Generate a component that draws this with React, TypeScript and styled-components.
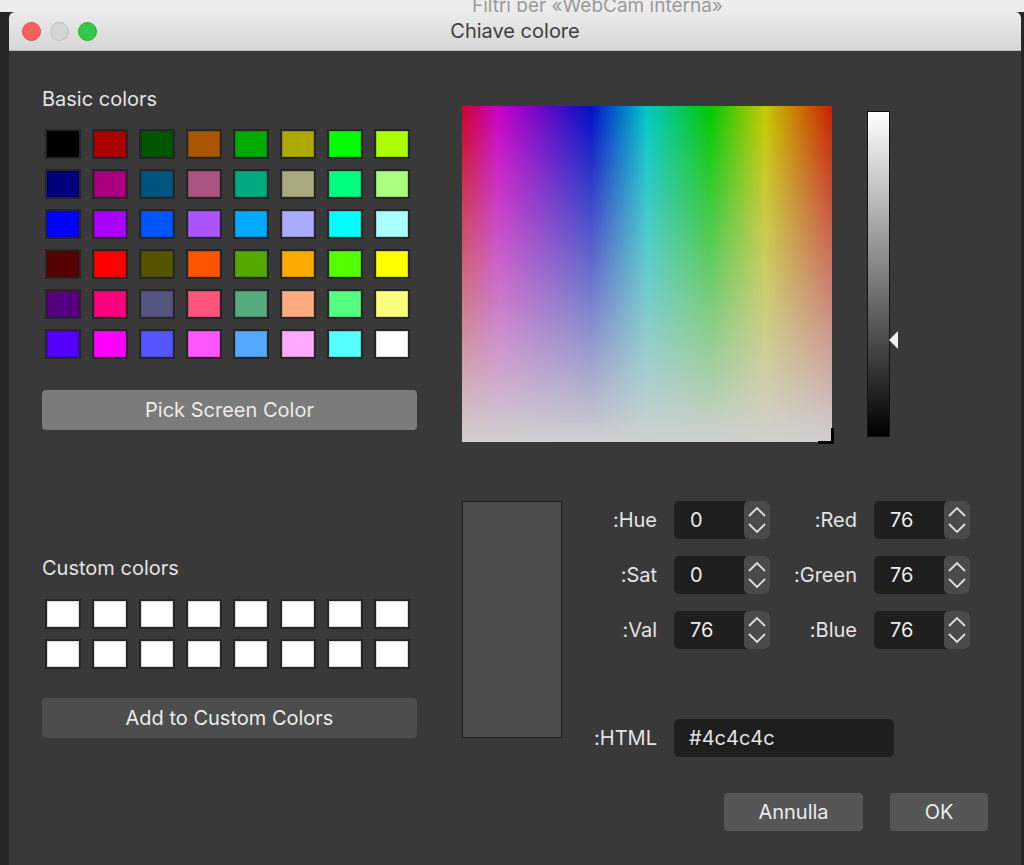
import React from 'react'
import styled, { createGlobalStyle } from 'styled-components'

const Global = createGlobalStyle`
  html, body { margin: 0; padding: 0; background: #2b2b2b; }
  body { font-family: Inter, "Noto Sans", "Liberation Sans", sans-serif; -webkit-font-smoothing: antialiased; }
`

const basic = [
  ['#000000', '#aa0000', '#005500', '#aa5500', '#00aa00', '#aaaa00', '#00ff00', '#aaff00'],
  ['#00007f', '#aa007f', '#00557f', '#aa557f', '#00aa7f', '#aaaa7f', '#00ff7f', '#aaff7f'],
  ['#0000ff', '#aa00ff', '#0055ff', '#aa55ff', '#00aaff', '#aaaaff', '#00ffff', '#aaffff'],
  ['#550000', '#ff0000', '#555500', '#ff5500', '#55aa00', '#ffaa00', '#55ff00', '#ffff00'],
  ['#55007f', '#ff007f', '#55557f', '#ff557f', '#55aa7f', '#ffaa7f', '#55ff7f', '#ffff7f'],
  ['#5500ff', '#ff00ff', '#5555ff', '#ff55ff', '#55aaff', '#ffaaff', '#55ffff', '#ffffff'],
]

const Desktop = styled.div`
  width: 1024px;
  height: 865px;
  overflow: hidden;
  display: flex;
  flex-direction: column;
`
const BackTitle = styled.div`
  height: 12px;
  flex: none;
  background: #ececec;
  overflow: hidden;
  color: #9a9a9a;
  font-size: 19px;
  line-height: 12px;
  padding-left: 472px;
  white-space: nowrap;
`
const DesktopRow = styled.div`
  flex: 1;
  display: flex;
`
const Side = styled.div<{ $w: number }>`
  width: ${p => p.$w}px;
  flex: none;
  background: #262626;
`
const Window = styled.div`
  width: 1012px;
  flex: none;
  display: flex;
  flex-direction: column;
  background: #393939;
  border-radius: 6px 6px 0 0;
  overflow: hidden;
`
const TitleBar = styled.div`
  height: 38px;
  flex: none;
  background: linear-gradient(#ebebeb, #d6d6d6);
  border-bottom: 1px solid #b8b8b8;
  display: flex;
  align-items: center;
  position: relative;
  padding-left: 13px;
  gap: 9px;
`
const Light = styled.span<{ $c: string; $b: string }>`
  width: 17px;
  height: 17px;
  border-radius: 50%;
  background: ${p => p.$c};
  border: 1px solid ${p => p.$b};
  position: relative;
  z-index: 1;
`
const Title = styled.div`
  position: absolute;
  left: 0;
  right: 0;
  text-align: center;
  font-size: 20px;
  color: #404040;
`
const Body = styled.div`
  flex: 1;
  display: flex;
  padding: 0 0 0 33px;
  gap: 45px;
  color: #e4e4e4;
  font-size: 20px;
`
const LeftCol = styled.div`
  width: 375px;
  display: flex;
  flex-direction: column;
`
const Label = styled.div<{ $top: number }>`
  margin-top: ${p => p.$top}px;
  height: 24px;
  line-height: 24px;
`
const Swatches = styled.div<{ $top: number }>`
  margin-top: ${p => p.$top}px;
  margin-left: 3px;
  display: grid;
  grid-template-columns: repeat(8, 36px);
  grid-auto-rows: 30px;
  column-gap: 11px;
  row-gap: 10px;
`
const Swatch = styled.div<{ $c: string }>`
  background: ${p => p.$c};
  border: 2px solid #262626;
  box-shadow: inset 0 0 0 1px rgba(0, 0, 0, 0.15);
`
const WideButton = styled.div<{ $top: number; $light?: boolean }>`
  margin-top: ${p => p.$top}px;
  height: 40px;
  border-radius: 4px;
  background: ${p => (p.$light ? '#7b7b7b' : '#4d4d4d')};
  display: flex;
  align-items: center;
  justify-content: center;
  color: #ececec;
`
const RightCol = styled.div`
  flex: 1;
  display: flex;
  flex-direction: column;
`
const PickerRow = styled.div`
  margin-top: 55px;
  display: flex;
  gap: 35px;
`
const Spectrum = styled.div`
  width: 370px;
  height: 336px;
  position: relative;
  background: linear-gradient(to bottom, rgba(208, 208, 208, 0), rgba(208, 208, 208, 1)),
    linear-gradient(to right, #d0002a, #c800c8 10%, #0010c8 35%, #00c8c8 50%, #00c800 67%, #c8c800 82%, #c82000);
`
const Cross = styled.div`
  position: absolute;
  right: -2px;
  bottom: -2px;
  width: 13px;
  height: 13px;
  border-right: 3px solid #000;
  border-bottom: 3px solid #000;
`
const ValueBar = styled.div`
  margin-top: 5px;
  width: 21px;
  height: 324px;
  border: 1px solid #111;
  background: linear-gradient(#ffffff, #000000);
  position: relative;
`
const Pointer = styled.div`
  position: absolute;
  right: -9px;
  top: 219px;
  width: 0;
  height: 0;
  border-top: 9px solid transparent;
  border-bottom: 9px solid transparent;
  border-right: 9px solid #f2f2f2;
`
const Lower = styled.div`
  margin-top: 59px;
  display: flex;
`
const Preview = styled.div`
  width: 98px;
  height: 235px;
  background: #4c4c4c;
  border: 1px solid #1d1d1d;
`
const Fields = styled.div`
  display: grid;
  grid-template-columns: 95px 96px 70px 96px;
  column-gap: 17px;
  row-gap: 17px;
  grid-auto-rows: 38px;
  align-items: center;
`
const FieldLabel = styled.div`
  text-align: right;
  white-space: nowrap;
  direction: rtl;
`
const Spin = styled.div`
  height: 38px;
  display: flex;
  background: #1e1e1e;
  border-radius: 5px;
  overflow: hidden;
`
const SpinText = styled.div`
  flex: 1;
  padding-left: 16px;
  line-height: 38px;
  color: #ececec;
`
const Arrows = styled.div`
  width: 26px;
  background: #4a4a4a;
  border-radius: 5px;
  display: flex;
  flex-direction: column;
  justify-content: space-around;
  align-items: center;
  padding: 2px 0;
`
const HtmlBox = styled.div`
  grid-column: 2 / span 3;
  width: 205px;
  height: 38px;
  line-height: 38px;
  background: #1e1e1e;
  border-radius: 5px;
  padding-left: 15px;
  margin-top: 106px;
`
const HtmlLabel = styled(FieldLabel)`
  margin-top: 106px;
`
const Footer = styled.div`
  margin-top: 55px;
  display: flex;
  justify-content: flex-end;
  gap: 27px;
  padding-right: 33px;
`
const DlgButton = styled.div<{ $w: number }>`
  width: ${p => p.$w}px;
  height: 38px;
  border-radius: 4px;
  background: #565656;
  display: flex;
  align-items: center;
  justify-content: center;
  color: #ececec;
`

const Chev = ({ up }: { up?: boolean }) => (
  <svg width="20" height="11" viewBox="0 0 20 11">
    <path d={up ? 'M2 10 L10 2 L18 10' : 'M2 1 L10 9 L18 1'} stroke="#e0e0e0" strokeWidth="1.8" fill="none" />
  </svg>
)

const SpinBox = ({ value }: { value: string }) => (
  <Spin>
    <SpinText>{value}</SpinText>
    <Arrows>
      <Chev up />
      <Chev />
    </Arrows>
  </Spin>
)

const fields = [
  ['Hue:', '0', 'Red:', '76'],
  ['Sat:', '0', 'Green:', '76'],
  ['Val:', '76', 'Blue:', '76'],
]

export default function App() {
  return (
    <Desktop>
      <Global />
      <BackTitle>Filtri per «WebCam interna»</BackTitle>
      <DesktopRow>
        <Side $w={9} />
        <Window>
          <TitleBar>
            <Light $c="#fc605b" $b="#de4a44" />
            <Light $c="#d5d5d5" $b="#bdbdbd" />
            <Light $c="#34c84a" $b="#2aa83c" />
            <Title>Chiave colore</Title>
          </TitleBar>
          <Body>
            <LeftCol>
              <Label $top={36}>Basic colors</Label>
              <Swatches $top={18}>
                {basic.flat().map((c, i) => (
                  <Swatch key={i} $c={c} />
                ))}
              </Swatches>
              <WideButton $top={31} $light>Pick Screen Color</WideButton>
              <Label $top={126}>Custom colors</Label>
              <Swatches $top={19}>
                {Array.from({ length: 16 }).map((_, i) => (
                  <Swatch key={i} $c="#ffffff" />
                ))}
              </Swatches>
              <WideButton $top={29}>Add to Custom Colors</WideButton>
            </LeftCol>
            <RightCol>
              <PickerRow>
                <Spectrum>
                  <Cross />
                </Spectrum>
                <ValueBar>
                  <Pointer />
                </ValueBar>
              </PickerRow>
              <Lower>
                <Preview />
                <Fields>
                  {fields.map(r => (
                    <React.Fragment key={r[0]}>
                      <FieldLabel>{r[0]}</FieldLabel>
                      <SpinBox value={r[1]} />
                      <FieldLabel>{r[2]}</FieldLabel>
                      <SpinBox value={r[3]} />
                    </React.Fragment>
                  ))}
                  <HtmlLabel>HTML:</HtmlLabel>
                  <HtmlBox>#4c4c4c</HtmlBox>
                </Fields>
              </Lower>
              <Footer>
                <DlgButton $w={139}>Annulla</DlgButton>
                <DlgButton $w={98}>OK</DlgButton>
              </Footer>
            </RightCol>
          </Body>
        </Window>
        <Side $w={3} />
      </DesktopRow>
    </Desktop>
  )
}
